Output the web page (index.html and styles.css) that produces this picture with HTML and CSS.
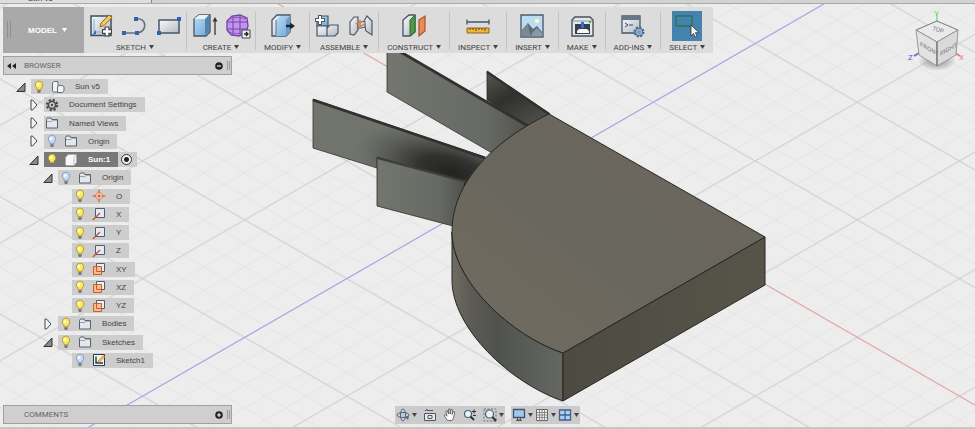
FILE: index.html
```html
<!DOCTYPE html>
<html lang="en">
<head>
  <meta charset="UTF-8">
  <meta name="viewport" content="width=device-width, initial-scale=1.0">
  <title>Sun v5</title>
  <link rel="stylesheet" href="styles.css">
</head>
<body>
  <!-- shared icons -->
  <svg class="defs" aria-hidden="true">
    <defs>
      <linearGradient id="blueFace" x1="0" y1="0" x2="1" y2="1"><stop offset="0" stop-color="#b9dcf5"/><stop offset="1" stop-color="#6fa6d6"/></linearGradient>
      <linearGradient id="greyFace" x1="0" y1="0" x2="1" y2="1"><stop offset="0" stop-color="#f8fafc"/><stop offset="1" stop-color="#b4bac4"/></linearGradient>
      <symbol id="bulb-on" viewBox="0 0 14 14"><path d="M7 1a4 4 0 0 0-2 7.300v1.400h4V8.300A4 4 0 0 0 7 1z" fill="#fbe955" stroke="#a88f35" stroke-width=".8"/><circle cx="6" cy="4.500" r="1.500" fill="#fffbd0"/><path d="M5.300 10.200h3.400v2L7.600 13H6.400l-1.100-.8z" fill="#777"/></symbol>
      <symbol id="bulb-off" viewBox="0 0 14 14"><path d="M7 1a4 4 0 0 0-2 7.300v1.400h4V8.300A4 4 0 0 0 7 1z" fill="#c5dbfa" stroke="#7f93b5" stroke-width=".8"/><circle cx="6" cy="4.500" r="1.500" fill="#f4f9ff"/><path d="M5.300 10.200h3.400v2L7.600 13H6.400l-1.100-.8z" fill="#777"/></symbol>
      <symbol id="folder" viewBox="0 0 14 14"><path d="M1.500 12V3.500L2.500 2H6l.8 1.500h5.700V12z" fill="#e4e8ee" stroke="#59616d"/><path d="M2 5.500h5l1-1.200h4" fill="none" stroke="#8a919b" stroke-width=".8"/></symbol>
      <symbol id="gear" viewBox="0 0 14 14"><circle cx="7" cy="7" r="5.200" fill="none" stroke="#4b4b4b" stroke-width="2" stroke-dasharray="2.300 1.780"/><circle cx="7" cy="7" r="3.600" fill="none" stroke="#4b4b4b" stroke-width="1.600"/><circle cx="7" cy="7" r="1.200" fill="#4b4b4b"/></symbol>
      <symbol id="parts" viewBox="0 0 14 14"><path d="M1.500 3L3 1.500h4V12H2.500l-1-1z" fill="#f1f3f5" stroke="#666c75"/><path d="M6.500 7L8 5.500h3.500l1.500 1V11l-1.500 1.500h-5z" fill="#f1f3f5" stroke="#666c75"/></symbol>
      <symbol id="body" viewBox="0 0 14 14"><path d="M1.500 4.500L4 1.500h8.500v8L10 12.500H2.500l-1-1z" fill="#f8f8f8" stroke="#aaa"/><path d="M10 4.500l2.300-2.500M10 4.500v7.800" stroke="#bbb" fill="none"/></symbol>
      <symbol id="point" viewBox="0 0 14 14"><path d="M7 2.500L11.500 7 7 11.500 2.500 7z" fill="#fbd9c3" stroke="#d9723e"/><path d="M7 .5v4M7 9.500v4M.5 7h4M9.500 7h4" stroke="#c9602e"/><circle cx="7" cy="7" r="1.500" fill="#c9602e"/></symbol>
      <symbol id="axis" viewBox="0 0 14 14"><path d="M3.500 1.500h9v9h-9z" fill="#e6e9ee" stroke="#4f5f73"/><path d="M.8 13L8 6" stroke="#b6533a" stroke-width="1.300"/></symbol>
      <symbol id="plane" viewBox="0 0 14 14"><path d="M4.500 1.500h8v8h-8z" fill="#edf0f3" stroke="#4f5f73"/><path d="M1.500 4.500h8v8h-8z" fill="#ffb98f" stroke="#c2602f"/><path d="M4.500 4.500v5h5" fill="none" stroke="#c2602f"/></symbol>
      <symbol id="sketch" viewBox="0 0 14 14"><path d="M1.500 1.500h11v11h-11z" fill="#f1f5f8" stroke="#26394d"/><path d="M4 3.500V10h7" fill="none" stroke="#26394d" stroke-width="1.400"/><path d="M5.500 8.500L11 2.500l2 1.500-5.500 5z" fill="#f5bd35" stroke="#a87518" stroke-width=".5"/></symbol>
      <symbol id="closed" viewBox="0 0 10 12"><path d="M2 1v10h1.500L8 6 3.500 1z" fill="#f4f4f4" stroke="#444"/></symbol>
      <symbol id="open" viewBox="0 0 10 12"><path d="M.8 10.500H9V2z" fill="#8b8b8b" stroke="#333"/></symbol>
      <symbol id="caret" viewBox="0 0 5 4"><path d="M0 0h5L2.500 4z" fill="currentColor"/></symbol>
    </defs>
  </svg>

  <div class="app">
    <div class="tabs"><div class="tab">Sun v5</div></div>

    <main class="workspace">
      <svg class="canvas" viewBox="0 4 975 423" preserveAspectRatio="xMidYMid slice" aria-hidden="true">
        <defs>
          <pattern id="minor" width="40.840" height="23.520" patternUnits="userSpaceOnUse" x="551" y="161"><path d="M0 0l40.840 23.520M0 23.520L40.840 0" stroke="#e1e1e1" stroke-width=".8"/></pattern>
          <pattern id="major" width="204.200" height="117.600" patternUnits="userSpaceOnUse" x="551" y="161"><path d="M0 0l204.200 117.600M0 117.600L204.200 0" stroke="#c9c9c9" stroke-width=".9"/></pattern>
          <linearGradient id="top" x1="0" y1="1" x2="1" y2="0"><stop offset="0" stop-color="#716c61"/><stop offset=".5" stop-color="#69665d"/><stop offset="1" stop-color="#6d685e"/></linearGradient>
          <linearGradient id="curve" x1="452" x2="563" y1="0" y2="0" gradientUnits="userSpaceOnUse"><stop offset="0" stop-color="#6f6c62"/><stop offset=".15" stop-color="#5e5c55"/><stop offset=".4" stop-color="#50524e"/><stop offset="1" stop-color="#656762"/></linearGradient>
          <linearGradient id="side"><stop offset="0" stop-color="#4d4a41"/><stop offset="1" stop-color="#57544a"/></linearGradient>
          <linearGradient id="fin"><stop offset="0" stop-color="#73756f"/><stop offset=".7" stop-color="#676964"/><stop offset="1" stop-color="#50514d"/></linearGradient>
          <radialGradient id="shade" cx="0" cy="0" r="100" gradientUnits="userSpaceOnUse" gradientTransform="translate(452 172) rotate(16) scale(1 .42)"><stop offset="0" stop-color="#222321"/><stop offset=".35" stop-color="#2b2c2a" stop-opacity=".9"/><stop offset=".65" stop-color="#3c3d3a" stop-opacity=".5"/><stop offset="1" stop-color="#50524e" stop-opacity="0"/></radialGradient>
          <linearGradient id="backFin" x1="0" y1="0" x2=".6" y2="1"><stop offset="0" stop-color="#555751"/><stop offset=".5" stop-color="#30312e"/><stop offset="1" stop-color="#4c4d49"/></linearGradient>
        </defs>
        <rect width="975" height="429" fill="#ededed"/>
        <rect width="975" height="429" fill="url(#minor)"/>
        <rect width="975" height="429" fill="url(#major)"/>
        <path d="M277 3L975 405" stroke="#f29c9c"/>
        <path d="M82 431L824 4" stroke="#9d9cf0"/>

        <path d="M487 71l63 43-22 13-41-27z" fill="url(#backFin)" stroke="#292a27" stroke-width=".8"/>
        <path d="M487 72l62 42" stroke="#30312d" stroke-width="2.400"/>
        <path d="M387 44v48l105 61 37-27z" fill="url(#fin)" stroke="#343531" stroke-width=".8"/>
        <path d="M387 44l141 82" stroke="#31322f" stroke-width="2.800"/>
        <path d="M313 99l172 58-18 29-90-18-64-20z" fill="#71736d" stroke="#343531" stroke-width=".8"/>
        <path d="M313 99l172 58-18 29-90-18-64-20z" fill="url(#shade)"/>
        <path d="M313 100l172 58" stroke="#31322f" stroke-width="2.800"/>
        <path d="M377 157v49l76 20 12-44z" fill="url(#fin)" stroke="#292a27" stroke-width=".8"/>
        <path d="M377 158l90 24" stroke="#3e403b" stroke-width="2"/>

        <path d="M452 232v48c0 48 58 103 111 121v-48c-53-18-111-73-111-121z" fill="url(#curve)" stroke="#252622"/>
        <path d="M563 353l202-116v48L563 401z" fill="url(#side)" stroke="#252622"/>
        <path d="M549 114c-44 21-97 61-97 118 0 48 58 103 111 121l202-116z" fill="url(#top)" stroke="#252622"/>
      </svg>

      <div class="toolbar">
        <button class="mode"><i class="grip"></i>MODEL <svg class="caret"><use href="#caret"/></svg></button>

        <div class="group">
          <div class="icons">
            <button aria-label="Create Sketch"><svg viewBox="0 0 28 28"><path d="M4 4h20v19.500H4z" fill="url(#greyFace)" stroke="#3f4d60" stroke-width="1.500"/><path d="M7 7v13M7 20h12" stroke="#7db0da" fill="none"/><path d="M5 23l4-5v4z" fill="#2f69bb"/><path d="M13 15l1-4 8-8 3 2.500-8 8z" fill="#f5c85b" stroke="#8c6a2b"/><path d="M20 14.500v10M15 19.500h10" stroke="#444" stroke-width="5"/><path d="M20 15.500v8M16 19.500h8" stroke="#fff" stroke-width="2.500"/></svg></button>
            <button aria-label="Arc"><svg viewBox="0 0 28 28"><path d="M3 21h13M15 7c11-2 12 13 1 14" fill="none" stroke="#66717d" stroke-width="1.600"/><path d="M1 19h4v4H1zM14 19h4v4h-4zM13 5h4v4h-4z" fill="#2e63b5"/></svg></button>
            <button aria-label="Rectangle"><svg viewBox="0 0 28 28"><path d="M4 8h20v13H4z" fill="url(#greyFace)" stroke="#4a5665" stroke-width="1.500"/><path d="M2 19h4v4H2zM22 5h4v4h-4z" fill="#2e63b5"/></svg></button>
          </div>
          <button class="label">SKETCH<svg class="caret"><use href="#caret"/></svg></button>
        </div>

        <div class="group">
          <div class="icons">
            <button aria-label="Extrude"><svg viewBox="0 0 28 28"><path d="M4 7l5-4h11v17l-4 4H4z" fill="url(#blueFace)" stroke="#465568" stroke-width="1.300"/><path d="M4 7l5-4h10l-4 4z" fill="#e9f0f6"/><path d="M15 7v16l4-4V3z" fill="#5582ae"/><path d="M25 23V7" stroke="#333" stroke-width="1.300"/><path d="M22.500 9.500L25 5l2.500 4.500z" fill="#333"/></svg></button>
            <button aria-label="Create Form"><svg viewBox="0 0 28 28"><path d="M3 9l5-5 8-1 7 3 1 8-2 7-7 3-8-1-4-5z" fill="#c493ed" stroke="#7444a5" stroke-width="1.300"/><path d="M3 10h20M3 17h20M9 4v20M16 3v21" stroke="#7444a5" fill="none"/><path d="M5 7c6-2 12-2 17 0M5 20c6 2 11 2 16 0" stroke="#8a55bd" fill="none"/><path d="M18 18h8v8h-8z" fill="#eee" stroke="#444"/><path d="M20 22h4M22 20l2 2-2 2" stroke="#222" fill="none" stroke-width="1.300"/></svg></button>
          </div>
          <button class="label">CREATE<svg class="caret"><use href="#caret"/></svg></button>
        </div>

        <div class="group">
          <div class="icons">
            <button aria-label="Press Pull"><svg viewBox="0 0 28 28"><path d="M3 8l5-5h13v17l-4 4H3z" fill="url(#greyFace)" stroke="#465568" stroke-width="1.300"/><path d="M7 8l4-4h10v16l-4 4H7z" fill="url(#blueFace)"/><path d="M17 8v15l4-4V4z" fill="#6a9dce"/><path d="M7 8v15" stroke="#597697"/><path d="M17 14h5" stroke="#222" stroke-width="2.500"/><path d="M21 10.500l5 3.500-5 3.500z" fill="#222"/></svg></button>
          </div>
          <button class="label">MODIFY<svg class="caret"><use href="#caret"/></svg></button>
        </div>

        <div class="group">
          <div class="icons">
            <button aria-label="New Component"><svg viewBox="0 0 28 28"><path d="M4 8l3-4h8v10H4z" fill="url(#blueFace)" stroke="#465568" stroke-width="1.200"/><path d="M4 14h10v10H4zM14 16l3-3h8v8l-3 3h-8z" fill="url(#greyFace)" stroke="#465568" stroke-width="1.200"/><path d="M7 3v10M2 8h10" stroke="#555" stroke-width="4"/><path d="M7 4v8M3 8h8" stroke="#fff" stroke-width="2"/></svg></button>
            <button aria-label="Joint"><svg viewBox="0 0 28 28"><path d="M3 10l4-5h4v13l-4 5-4-1z" fill="url(#greyFace)" stroke="#505967" stroke-width="1.200"/><path d="M17 9l3-5 5 5v14l-6-4z" fill="url(#greyFace)" stroke="#505967" stroke-width="1.200"/><path d="M11 10h4l3-1v6l-4 1h-3z" fill="#d8dde4" stroke="#505967"/><path d="M9 12l4-3v6l4-3" fill="none" stroke="#df7837" stroke-width="1.500"/></svg></button>
          </div>
          <button class="label">ASSEMBLE<svg class="caret"><use href="#caret"/></svg></button>
        </div>

        <div class="group">
          <div class="icons">
            <button aria-label="Offset Plane"><svg viewBox="0 0 28 28"><path d="M3 8l6-5h6v17l-5 4H3z" fill="url(#greyFace)" stroke="#465568" stroke-width="1.300"/><path d="M10 8l5-5v17l-5 4z" fill="#4b9a44" stroke="#39683b"/><path d="M19 8l6-4v15l-6 5z" fill="#ed8b52" stroke="#a5542c" stroke-width="1.200"/></svg></button>
          </div>
          <button class="label">CONSTRUCT<svg class="caret"><use href="#caret"/></svg></button>
        </div>

        <div class="group">
          <div class="icons">
            <button aria-label="Measure"><svg viewBox="0 0 28 28"><path d="M3 10h22M3 7.500v5M25 7.500v5" stroke="#43566c" stroke-width="1.300"/><path d="M3 16h22v5H3z" fill="#f3b437" stroke="#8d671e"/><path d="M6 16v2M9 16v2M12 16v3M15 16v2M18 16v2M21 16v3" stroke="#604818"/></svg></button>
          </div>
          <button class="label">INSPECT<svg class="caret"><use href="#caret"/></svg></button>
        </div>

        <div class="group">
          <div class="icons">
            <button aria-label="Decal"><svg viewBox="0 0 28 28"><path d="M3 3h22v22H3z" fill="#bcdcf2" stroke="#4d5c6d" stroke-width="1.400"/><circle cx="19" cy="9" r="2.200" fill="#fff6c6"/><path d="M4 18l6-7 5 6 4-3 5 6v4H4z" fill="#5a6b7c"/><path d="M4 19l6-8 1 8 3 5H4z" fill="#7b8996"/><path d="M14 21l5-5 5 5v3H14z" fill="#8999a8"/></svg></button>
          </div>
          <button class="label">INSERT<svg class="caret"><use href="#caret"/></svg></button>
        </div>

        <div class="group">
          <div class="icons">
            <button aria-label="3D Print"><svg viewBox="0 0 28 28"><path d="M4 8l3-3h15l3 3v16H4z" fill="#e5e8eb" stroke="#46505d" stroke-width="1.400"/><path d="M5 9h19" stroke="#8a929d"/><path d="M7 12h15v10H7z" fill="#34404d"/><path d="M9 19l2-2h8l2 2v2H9z" fill="#f7f7f7"/><path d="M13 10h3v5l-1.500 2-1.500-2z" fill="#2e72cb"/><circle cx="22" cy="10" r="1.200" fill="#5ca345"/></svg></button>
          </div>
          <button class="label">MAKE<svg class="caret"><use href="#caret"/></svg></button>
        </div>

        <div class="group">
          <div class="icons">
            <button aria-label="Scripts and Add-Ins"><svg viewBox="0 0 28 28"><path d="M3 4h18v17H3z" fill="url(#greyFace)" stroke="#4a5665" stroke-width="1.300"/><path d="M3 4h18v4H3z" fill="#66778a"/><path d="M6 11l3 2-3 2M10 13h4" fill="none" stroke="#3c4653"/><circle cx="20" cy="20" r="4.500" fill="#a9c9ea" stroke="#45668d" stroke-width="2" stroke-dasharray="2.200 1.300"/><circle cx="20" cy="20" r="3.500" fill="#a9c9ea" stroke="#45668d"/><circle cx="20" cy="20" r="1.200" fill="#fff" stroke="#45668d"/></svg></button>
          </div>
          <button class="label">ADD-INS<svg class="caret"><use href="#caret"/></svg></button>
        </div>

        <div class="group">
          <div class="icons">
            <button class="selected" aria-label="Select"><svg viewBox="0 0 28 28"><path d="M3 4h16v10H3z" fill="none" stroke="#27774c" stroke-width="1.300"/><path d="M18 13v11l2.500-2.500L22 25l2-1-1.700-3.300H26z" fill="#f7f7f7" stroke="#333" stroke-width=".8"/></svg></button>
          </div>
          <button class="label">SELECT<svg class="caret"><use href="#caret"/></svg></button>
        </div>
      </div>

      <svg class="viewcube" viewBox="0 0 60 64" role="img" aria-label="View cube">
        <defs><radialGradient id="cubeShadow"><stop offset="0" stop-color="#888"/><stop offset="1" stop-color="#888" stop-opacity="0"/></radialGradient></defs>
        <ellipse cx="30" cy="53" rx="19" ry="10" fill="url(#cubeShadow)"/>
        <path d="M30 14V5" stroke="#66dc77" stroke-width="1.300"/>
        <path d="M12 45l-5 3" stroke="#6666df" stroke-width="2"/>
        <path d="M48 45l5 3" stroke="#ed7777" stroke-width="2"/>
        <path d="M9 22l21-9 21 9-21 12z" fill="#eaeaea" stroke="#777"/>
        <path d="M9 22l21 12v24L12 47z" fill="#e2e2e2" stroke="#999"/>
        <path d="M51 22L30 34v24l19-11z" fill="#dadada" stroke="#999"/>
        <path d="M30 34v24" stroke="#666"/>
        <text class="face" transform="translate(25 22) rotate(18)">TOP</text>
        <text class="face" transform="translate(13 38) skewY(29)">FRONT</text>
        <text class="face" transform="translate(33 48) skewY(-29)">RIGHT</text>
        <text class="axis y" x="27" y="8">Y</text>
        <text class="axis z" x="1" y="52">Z</text>
        <text class="axis x" x="52" y="52">X</text>
      </svg>

      <section class="panel">
        <svg class="collapse" viewBox="0 0 9 6"><path d="M4 0v6L0 3zM9 0v6L5 3z" fill="#222"/></svg>
        <h2>BROWSER</h2>
        <button aria-label="Hide browser"><svg viewBox="0 0 8 8"><circle cx="4" cy="4" r="3.800" fill="#222"/><path d="M2 4h4" stroke="#eee" stroke-width="1.200"/></svg></button>
        <i class="handle"></i>
      </section>

      <ul class="tree">
        <li><svg class="arrow"><use href="#open"/></svg><div class="node"><svg><use href="#bulb-on"/></svg><svg><use href="#parts"/></svg><span>Sun v5</span></div></li>
        <li class="l1"><svg class="arrow"><use href="#closed"/></svg><div class="node"><svg><use href="#gear"/></svg><span>Document Settings</span></div></li>
        <li class="l1"><svg class="arrow"><use href="#closed"/></svg><div class="node"><svg><use href="#folder"/></svg><span>Named Views</span></div></li>
        <li class="l1"><svg class="arrow"><use href="#closed"/></svg><div class="node"><svg><use href="#bulb-off"/></svg><svg><use href="#folder"/></svg><span>Origin</span></div></li>
        <li class="l1"><svg class="arrow"><use href="#open"/></svg><div class="node active"><svg><use href="#bulb-on"/></svg><svg><use href="#body"/></svg><span>Sun:1</span></div><label class="activate"><input type="radio" name="component" aria-label="Activate Sun:1" checked></label></li>
        <li class="l2"><svg class="arrow"><use href="#open"/></svg><div class="node"><svg><use href="#bulb-off"/></svg><svg><use href="#folder"/></svg><span>Origin</span></div></li>
        <li class="l3"><div class="node"><svg><use href="#bulb-on"/></svg><svg><use href="#point"/></svg><span>O</span></div></li>
        <li class="l3"><div class="node"><svg><use href="#bulb-on"/></svg><svg><use href="#axis"/></svg><span>X</span></div></li>
        <li class="l3"><div class="node"><svg><use href="#bulb-on"/></svg><svg><use href="#axis"/></svg><span>Y</span></div></li>
        <li class="l3"><div class="node"><svg><use href="#bulb-on"/></svg><svg><use href="#axis"/></svg><span>Z</span></div></li>
        <li class="l3"><div class="node"><svg><use href="#bulb-on"/></svg><svg><use href="#plane"/></svg><span>XY</span></div></li>
        <li class="l3"><div class="node"><svg><use href="#bulb-on"/></svg><svg><use href="#plane"/></svg><span>XZ</span></div></li>
        <li class="l3"><div class="node"><svg><use href="#bulb-on"/></svg><svg><use href="#plane"/></svg><span>YZ</span></div></li>
        <li class="l2"><svg class="arrow"><use href="#closed"/></svg><div class="node"><svg><use href="#bulb-on"/></svg><svg><use href="#folder"/></svg><span>Bodies</span></div></li>
        <li class="l2"><svg class="arrow"><use href="#open"/></svg><div class="node"><svg><use href="#bulb-on"/></svg><svg><use href="#folder"/></svg><span>Sketches</span></div></li>
        <li class="l3"><div class="node"><svg><use href="#bulb-off"/></svg><svg><use href="#sketch"/></svg><span>Sketch1</span></div></li>
      </ul>

      <footer class="bottom">
        <section class="panel">
          <span class="collapse"></span>
          <h2>COMMENTS</h2>
          <button aria-label="Show comments"><svg viewBox="0 0 8 8"><circle cx="4" cy="4" r="3.800" fill="#222"/><path d="M2 4h4M4 2v4" stroke="#eee" stroke-width="1.200"/></svg></button>
          <i class="handle"></i>
        </section>

        <nav class="view-tools">
          <div class="tools">
            <button aria-label="Orbit"><svg viewBox="0 0 14 14"><ellipse cx="7" cy="7" rx="6" ry="2.500" fill="none" stroke="#52677c"/><ellipse cx="7" cy="7" rx="2.500" ry="6" fill="none" stroke="#52677c"/><path d="M9 9l4-1-1 4z" fill="#52677c"/></svg><svg class="caret"><use href="#caret"/></svg></button>
            <button aria-label="Look At"><svg viewBox="0 0 14 14"><path d="M1.500 5.500h11v7h-11z" fill="#e6e8ea" stroke="#4d5966"/><path d="M5 7.500h4v3H5zM2 3l2-2v1.500h6" fill="none" stroke="#4d5966"/></svg></button>
            <button aria-label="Pan"><svg viewBox="0 0 14 14"><path d="M4.500 12.500L1 7.500l1.500-.8L4 8.200 2.800 3l1.400-.4L5.500 6V1h1.600v5l1-4.500 1.500.3L9 6.500l1.500-3 1.300.5-1.300 6-1.500 2.500z" fill="#fafafa" stroke="#555" stroke-width=".8"/></svg></button>
            <button aria-label="Zoom"><svg viewBox="0 0 14 14"><circle cx="5" cy="6" r="3.500" fill="#eaf3f7" stroke="#52616e" stroke-width="1.200"/><path d="M7.500 8.500L11 12" stroke="#333" stroke-width="2"/><path d="M9 3.500h4M11 1.500v4M10 7.500h3" stroke="#333"/></svg></button>
            <button aria-label="Fit"><svg viewBox="0 0 14 14"><path d="M1 1h12v12H1z" fill="none" stroke="#777" stroke-dasharray="2 1.500"/><circle cx="6.500" cy="6" r="4" fill="#eaf3f7" stroke="#52616e" stroke-width="1.200"/><path d="M9.500 9l3.500 4" stroke="#333" stroke-width="2"/></svg><svg class="caret"><use href="#caret"/></svg></button>
          </div>
          <div class="tools">
            <button aria-label="Display Settings"><svg viewBox="0 0 14 14"><path d="M1.500 1.500h11v8h-11z" fill="#a3c8ee" stroke="#42556b" stroke-width="1.300"/><path d="M5.500 10v2h3v-2M4 12.500h6" fill="none" stroke="#555"/></svg><svg class="caret"><use href="#caret"/></svg></button>
            <button aria-label="Grid and Snaps"><svg viewBox="0 0 14 14"><path d="M1.500 1.500h11v11h-11z" fill="#eee" stroke="#666"/><path d="M4.500 1v12M7 1v12M9.500 1v12M1 4.500h12M1 7h12M1 9.500h12" stroke="#777" stroke-width=".8"/></svg><svg class="caret"><use href="#caret"/></svg></button>
            <button aria-label="Viewports"><svg viewBox="0 0 14 14"><path d="M1.500 2h11v10h-11z" fill="#b0d0f2" stroke="#40628e" stroke-width="1.300"/><path d="M7 2v10M1.500 7h11" stroke="#40628e" stroke-width="1.300"/></svg><svg class="caret"><use href="#caret"/></svg></button>
          </div>
        </nav>
      </footer>
    </main>
  </div>
</body>
</html>
```

FILE: styles.css
```css
* {
  box-sizing: border-box;
}
body {
  margin: 0;
  font-family: 'Liberation Sans', Arial, sans-serif;
  font-size: 8px;
  color: #444;
  background: #ededed;
}
button {
  display: flex;
  align-items: center;
  justify-content: center;
  padding: 0;
  border: none;
  background: none;
  color: inherit;
  font: inherit;
  cursor: pointer;
}
svg {
  display: block;
  flex: none;
}
.defs {
  position: absolute;
  width: 0;
  height: 0;
}
.app {
  display: flex;
  flex-direction: column;
  min-height: 100vh;
}

/* document tabs */
.tabs {
  display: flex;
  height: 4px;
  overflow: hidden;
  background: #d2d2d2;
  border-bottom: 1px solid #aaa;
}
.tab {
  display: flex;
  align-items: flex-end;
  width: 152px;
  padding-left: 28px;
  background: #dedede;
  border-right: 1px solid #888;
  line-height: 8px;
}

.workspace {
  position: relative;
  flex: 1;
  display: flex;
  flex-direction: column;
  padding: 3px;
  border-bottom: 2px solid #c6c6c6;
}
.canvas {
  position: absolute;
  inset: 0;
  width: 100%;
  height: 100%;
}

/* toolbar */
.toolbar {
  position: relative;
  display: flex;
  align-self: flex-start;
  height: 46px;
  background: #dcdcdc;
  font-family: Roboto, sans-serif;
}
.caret {
  width: 5px;
  height: 4px;
}
.mode {
  position: relative;
  width: 81px;
  gap: 5px;
  padding-left: 8px;
  background: #a9a9a9;
  color: #fff;
  font-family: 'Liberation Sans', Arial, sans-serif;
  font-weight: bold;
}
.grip {
  position: absolute;
  left: 4px;
  top: 14px;
  width: 4px;
  height: 17px;
  border: 1px solid #8f8f8f;
  border-width: 0 1px;
}
.group {
  display: flex;
  flex-direction: column;
  align-items: center;
  padding: 4px 8px 0;
}
.group + .group {
  background: linear-gradient(#c4c4c4, #c4c4c4) 0 4px / 1px 39px no-repeat;
  padding-left: 9px;
}
.icons {
  display: flex;
  gap: 6px;
  height: 30px;
  margin: 0 -5px;
}
.icons svg {
  width: 28px;
  height: 28px;
}
.selected {
  width: 30px;
  background: #4682b0;
}
.label {
  gap: 3px;
  height: 12px;
}

.viewcube {
  position: absolute;
  top: 4px;
  right: 8px;
  width: 60px;
  height: 64px;
}
.face {
  font: 6px Roboto, sans-serif;
  fill: #777;
}
.axis {
  font: 8px Roboto, sans-serif;
}
.axis.x {
  fill: #ed7777;
}
.axis.y {
  fill: #66dc77;
}
.axis.z {
  fill: #5555df;
}

/* browser and comments bars */
.panel {
  position: relative;
  display: flex;
  align-items: center;
  width: 229px;
  height: 19px;
  padding-left: 3px;
  background: #cfcfcf;
  border: 1px solid #a0a0a0;
  font-family: Roboto, sans-serif;
}
.toolbar ~ .panel {
  margin-top: 3px;
}
.panel h2 {
  flex: 1;
  margin: 0;
  font-size: 8px;
  font-weight: normal;
  color: #666;
}
.panel button svg {
  width: 8px;
  height: 8px;
}
.collapse {
  width: 9px;
  height: 6px;
  margin-right: 8px;
}
.handle {
  width: 3px;
  height: 9px;
  margin: 0 1px 0 4px;
  border: 1px solid #999;
  border-width: 0 1px;
}

/* browser tree */
.tree {
  position: relative;
  flex: 1;
  display: flex;
  flex-direction: column;
  justify-content: space-between;
  align-items: flex-start;
  margin: 0;
  padding: 4px 0 37px 13px;
  list-style: none;
}
.tree li {
  display: flex;
  align-items: center;
  height: 15px;
}
.tree .l1 {
  padding-left: 13px;
}
.tree .l2 {
  padding-left: 27px;
}
.tree .l3 {
  padding-left: 56px;
}
.arrow {
  width: 10px;
  height: 12px;
  margin-right: 5px;
}
.node {
  display: flex;
  align-items: center;
  height: 15px;
  padding: 0 8px 0 1px;
  background: #cdcdcd;
}
.node svg {
  width: 14px;
  height: 14px;
}
.node svg + svg {
  margin-left: 5px;
}
.node span {
  margin-left: 10px;
}
.node.active {
  background: #787878;
  color: #fff;
  font-weight: bold;
}
.activate {
  display: flex;
  align-items: center;
  height: 15px;
  padding: 0 5px 0 3px;
  background: #cdcdcd;
}
.activate input {
  appearance: none;
  width: 11px;
  height: 11px;
  margin: 0;
  border: 1px solid #333;
  border-radius: 50%;
  background: radial-gradient(circle, #222 2px, #f2f2f2 3px);
}

/* bottom bar */
.bottom {
  position: relative;
  display: grid;
  grid-template-columns: 1fr auto 1fr;
  align-items: center;
}
.view-tools {
  display: flex;
  gap: 6px;
}
.tools {
  display: flex;
  align-items: center;
  gap: 6px;
  height: 18px;
  padding: 0 1px;
  background: #cbcbcb;
}
.tools button {
  gap: 2px;
}
.tools svg:first-child {
  width: 14px;
  height: 14px;
}
.tools + .tools {
  gap: 2px;
}
```
